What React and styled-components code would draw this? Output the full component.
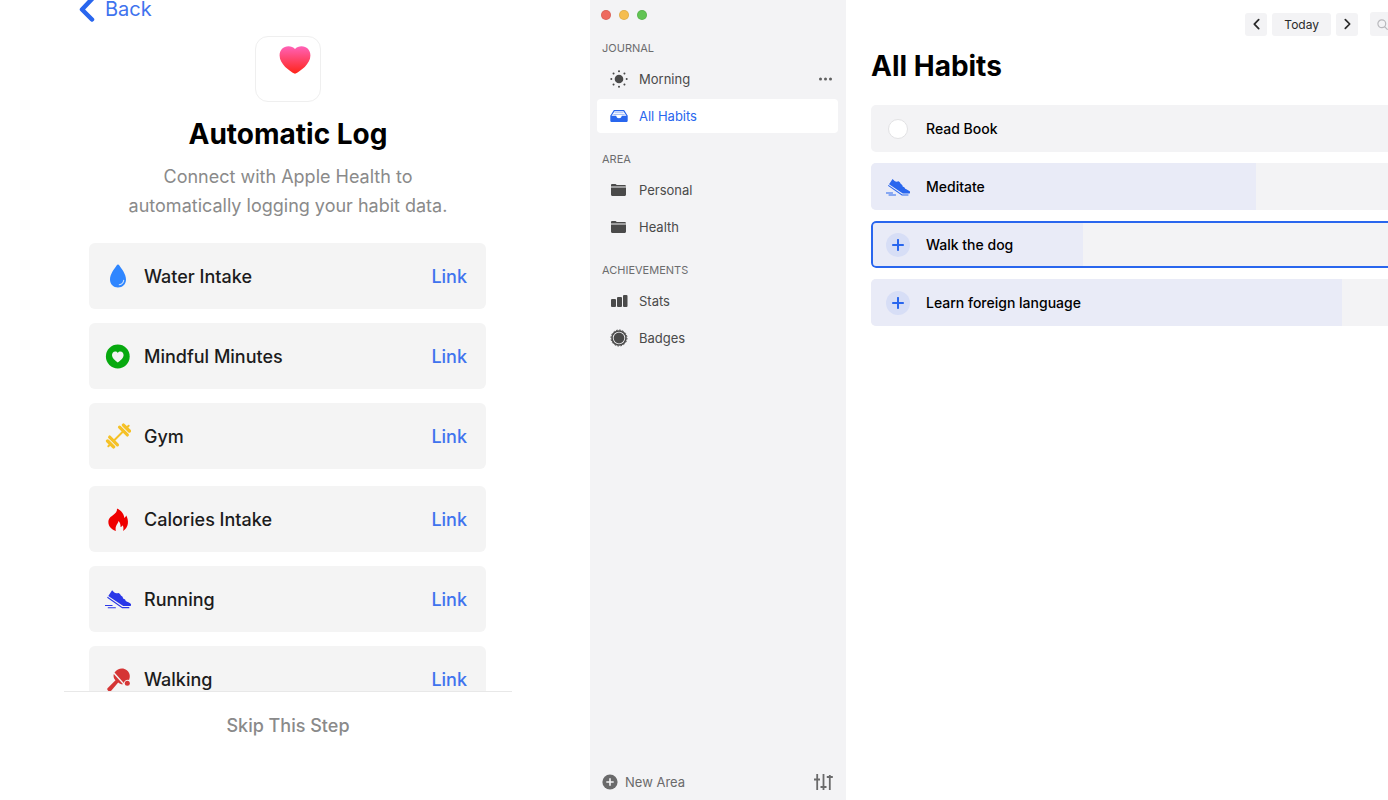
import styled, { createGlobalStyle } from 'styled-components';

const color = {
    blue: '#2966ee',
    link: '#3f73ee',
    panel: '#f3f3f5',
    card: '#f4f4f4',
    progress: '#e9ebf7',
    icon: '#4a4a4a',
    muted: '#8a8a8a',
}

const GlobalStyle = createGlobalStyle`
    *{
        box-sizing: border-box;
    }
    body{
        margin: 0;
        background: #fff;
        font-family: Inter, 'Liberation Sans', sans-serif;
    }
    button{
        border: none;
        background: none;
        padding: 0;
        font: inherit;
        color: inherit;
        cursor: pointer;
    }
    h1, h2, p, ul{
        margin: 0;
        padding: 0;
    }
    ul{
        list-style: none;
    }
    svg{
        display: block;
        flex: none;
    }
`

const Page = styled.div`
    display: grid;
    grid-template-columns: minmax(0, 590fr) 256px minmax(0, 542fr);
    height: 100vh;
    overflow: hidden;
`

/* onboarding */
const Onboarding = styled.section`
    display: flex;
    min-height: 0;
    padding: 0 78px 0 20px;
`

const Marks = styled.div`
    display: flex;
    flex-direction: column;
    gap: 30px;
    flex: 0 0 44px;
    padding-top: 20px;
    span{
        width: 10px;
        height: 10px;
        background: #fdfdfd;
    }
`

const Phone = styled.div`
    display: flex;
    flex-direction: column;
    flex: 1;
    min-width: 0;
`

const BackButton = styled.button`
    display: flex;
    align-items: center;
    align-self: flex-start;
    gap: 10px;
    height: 18px;
    margin-left: 15px;
    font-size: 20px;
    line-height: 18px;
    color: ${color.link};
    svg{
        color: ${color.blue};
    }
`

const AppIcon = styled.div`
    align-self: center;
    display: flex;
    justify-content: flex-end;
    width: 66px;
    height: 66px;
    margin-top: 18px;
    padding: 9px;
    border: 1px solid #efefef;
    border-radius: 13px;
`

const Intro = styled.div`
    padding: 14px 24px 23px;
    text-align: center;
    h1{
        font-size: 28px;
        line-height: 36px;
        font-weight: 700;
        margin-bottom: 10px;
    }
    p{
        font-size: 18px;
        line-height: 29px;
        color: ${color.muted};
    }
`

const Sources = styled.div`
    display: flex;
    flex-direction: column;
    flex: 1;
    gap: 17px;
    min-height: 0;
    overflow: hidden;
    padding: 0 26px 0 25px;
    ul{
        display: flex;
        flex-direction: column;
        gap: 14px;
    }
`

const Source = styled.li`
    display: flex;
    align-items: center;
    gap: 13px;
    height: 66px;
    padding: 0 19px 0 16px;
    border-radius: 6px;
    background: ${color.card};
    font-size: 18px;
    font-weight: 500;
    color: #1c1c1c;
    .name{
        flex: 1;
    }
    button{
        color: ${color.link};
    }
`

const Skip = styled.footer`
    display: flex;
    justify-content: center;
    height: 109px;
    border-top: 1px solid #e8e8e8;
    button{
        height: 66px;
        font-size: 18px;
        font-weight: 500;
        color: ${color.muted};
    }
`

/* sidebar */
const Sidebar = styled.aside`
    display: flex;
    flex-direction: column;
    padding: 10px 8px 0 7px;
    background: ${color.panel};
`

const Lights = styled.div`
    display: flex;
    gap: 8px;
    padding-left: 4px;
    margin-bottom: 2px;
`

const Light = styled.span`
    width: 10px;
    height: 10px;
    border-radius: 50%;
    border: 1px solid rgba(0, 0, 0, .08);
    background: ${props => props.$fill};
`

const Section = styled.nav`
    margin-top: 18px;
    h2{
        padding-left: 5px;
        margin-bottom: 6px;
        font-size: 11px;
        line-height: 16px;
        font-weight: 400;
        color: #6c6c6e;
    }
    ul{
        display: flex;
        flex-direction: column;
        gap: 3px;
    }
`

const NavItem = styled.li`
    display: flex;
    align-items: center;
    height: 34px;
    padding: 0 5px 0 13px;
    border-radius: 4px;
    background: ${props => props.$active ? '#fff' : 'transparent'};
    color: ${props => props.$active ? color.blue : color.icon};
    a{
        display: flex;
        align-items: center;
        flex: 1;
        gap: 11px;
        font-size: 13px;
        color: inherit;
        text-decoration: none;
    }
`

const SidebarFooter = styled.div`
    display: flex;
    align-items: center;
    justify-content: space-between;
    height: 37px;
    margin-top: auto;
    padding: 0 5px;
    color: #6a6a6b;
    button{
        display: flex;
        align-items: center;
        gap: 7px;
        font-size: 13px;
    }
`

/* habits */
const Main = styled.main`
    min-width: 0;
    overflow: hidden;
    padding: 12px 0 0 25px;
    h1{
        margin: 11px 0 20px;
        font-size: 28px;
        line-height: 38px;
        font-weight: 700;
    }
`

const Toolbar = styled.div`
    display: flex;
    align-items: center;
    justify-content: flex-end;
    gap: 5px;
`

const ToolButton = styled.button`
    display: flex;
    align-items: center;
    justify-content: center;
    min-width: 22px;
    height: 23px;
    padding: 0 ${props => props.$wide ? '12px' : '0'};
    border-radius: 3px;
    background: ${color.panel};
    font-size: 12px;
    color: #2a2a2a;
`

const Search = styled.label`
    display: flex;
    align-items: center;
    flex: 0 0 18px;
    height: 24px;
    margin-left: 7px;
    padding-left: 7px;
    border-radius: 3px 0 0 3px;
    background: ${color.panel};
    color: #b9b9bd;
    overflow: hidden;
    input{
        width: 120px;
        margin-left: 6px;
        border: none;
        background: none;
        font: inherit;
    }
`

const Habits = styled.ul`
    display: flex;
    flex-direction: column;
    gap: 11px;
    margin-right: -8px;
`

const Habit = styled.li`
    position: relative;
    display: flex;
    align-items: center;
    height: 47px;
    border-radius: 5px;
    overflow: hidden;
    background: ${color.panel};
    &::after{
        content: '';
        position: absolute;
        inset: 0;
        border: ${props => props.$selected ? `2px solid ${color.blue}` : 'none'};
        border-radius: 5px;
        pointer-events: none;
    }
    label, .row{
        position: relative;
        display: flex;
        align-items: center;
        gap: 16px;
        padding-left: 15px;
        font-size: 14px;
        font-weight: 500;
        color: #000;
    }
`

const Progress = styled.div`
    position: absolute;
    top: 0;
    bottom: 0;
    left: 0;
    background: ${color.progress};
`

const Check = styled.input`
    appearance: none;
    width: 20px;
    height: 20px;
    margin: 0 2px;
    border: 1px solid #e2e2e4;
    border-radius: 50%;
    background: #fff;
`

const AddButton = styled.button`
    display: flex;
    align-items: center;
    justify-content: center;
    width: 24px;
    height: 24px;
    border-radius: 50%;
    background: #d7def6;
    color: ${color.blue};
`

//icons
const Drop = () => (
    <svg width="26" height="26" viewBox="0 0 26 26">
        <path d="M13 1.4c.5 0 1 .4 1.4 1.1 2.4 3.6 6.6 8.7 6.6 14 0 4.8-3.5 8-8 8s-8-3.2-8-8c0-5.300 4.200-10.400 6.600-14 .4-.7.9-1.100 1.400-1.100z" fill="#2f86ff" />
        <path d="M18.700 17.200c-.3 2.600-1.900 4.100-4.400 4.600" fill="none" stroke="#cfe2fb" strokeWidth="1.100" strokeLinecap="round" />
    </svg>
)

const Mindful = () => (
    <svg width="26" height="26" viewBox="0 0 26 26">
        <circle cx="12.800" cy="13.500" r="11.900" fill="#07a90f" />
        <path d="M12.800 19.600c-2.600-1.900-5.800-4.500-5.800-7.500 0-2 1.400-3.600 3.200-3.600 1.100 0 2 .5 2.600 1.400.6-.9 1.500-1.400 2.600-1.400 1.800 0 3.200 1.600 3.200 3.600 0 3-3.200 5.600-5.800 7.500z" fill="#f4f4f4" />
    </svg>
)

const Dumbbell = () => (
    <svg width="26" height="26" viewBox="0 0 26 26" fill="none" stroke="#f5c126" strokeLinecap="round">
        <g transform="translate(13.500 13) rotate(-45)">
            <path d="M-6 0H6" strokeWidth="2" />
            <path d="M-7-5.500v11M7-5.500v11" strokeWidth="3.200" />
            <path d="M-11.200-4.200v8.400M11.200-4.200v8.400" strokeWidth="3.400" />
            <path d="M-14.400 0h2M12.400 0h2" strokeWidth="2" />
        </g>
    </svg>
)

const Flame = () => (
    <svg width="26" height="26" viewBox="0 0 26 26">
        <path d="M12 2.500c4.300 1.900 7 5.400 7.300 9.400 1-.5 1.700-1.300 2-2.300 2.600 5.300 2.700 11.700-3.300 15.400.7-1.900.6-4-.4-5.700-.5 1.100-1.200 1.600-2.100 1.800.2-2.600-.4-4.700-2-6.200-.3 3-3.900 4.600-2.600 10-5.300-1.600-8.500-5.900-7.300-10.900 1.300-4.600 9-5.500 8.400-11.500z" fill="#ef0000" />
    </svg>
)

const Sneaker = ({ fill, size = 26 }) => (
    <svg width={size} height={size} viewBox="0 0 26 26">
        <path d="M7.100 4.200l2.200 2.300c1.200 1 2.600.9 4.300.4l1.400 1 .9 1.700 1.700 1.200.5 1.700 2 1.100.7 1.300c1.600 1 3.700 1.400 5.200 3.100.7 1-.1 2.100-1.300 2.100h-6.500L3.300 10.100z" fill={fill} />
        <path d="M2.400 11.300L17.300 21.600h7" fill="none" stroke={fill} strokeWidth="1.100" />
        <path d="M0 19.500h7.500M2.800 21.700h8" stroke={fill} strokeWidth="1.100" />
    </svg>
)

const Paddle = () => (
    <svg width="26" height="26" viewBox="0 0 26 26" fill="#d53535">
        <path d="M9.500 6.500c3.200-4.200 8.500-5.300 12.300-2.300 3.400 2.700 3.600 6.800 2.200 9.700-2.600-.8-4.700.7-5.200 3.100z" />
        <path d="M8.800 8l9.300 10.200c-1.700.2-3.400-.3-4.900-1.700l-7.300 8.600c-1.700 1.300-4.600-1.200-3.400-2.900l8-7.900c-1.800-1.800-2.300-4.100-1.700-6.300z" />
        <circle cx="22.300" cy="17.200" r="2.500" />
    </svg>
)

const Heart = () => (
    <svg width="32" height="28" viewBox="0 0 32 28">
        <defs>
            <linearGradient id="heart" x1="0" y1="0" x2="0" y2="1">
                <stop offset="0" stopColor="#ff62b8" />
                <stop offset="1" stopColor="#ff2418" />
            </linearGradient>
        </defs>
        <path d="M16 3C17.600 1 20 .2 22.500 .2c5.200 0 8.900 3.800 8.900 9.200C31.400 18 21.500 25 16 27.800 10.500 25 .6 18 .6 9.400.6 4 4.300 .2 9.500 .2 12 .2 14.400 1 16 3z" fill="url(#heart)" />
    </svg>
)

const Chevron = ({ large, flip }) => (
    <svg width={large ? 16 : 7} height={large ? 26 : 12} viewBox="0 0 16 26" fill="none" stroke="currentColor" strokeWidth={large ? 4.5 : 4} strokeLinecap="round" strokeLinejoin="round">
        <path d={flip ? 'M3 3l10 10L3 23' : 'M13 3L3 13.500l10 10'} />
    </svg>
)

const NavIcon = ({ children }) => (
    <svg width="18" height="18" viewBox="0 0 18 18" fill="currentColor">{children}</svg>
)

const Sun = () => (
    <NavIcon>
        <circle cx="9" cy="9" r="4.300" />
        {[0, 45, 90, 135, 180, 225, 270, 315].map(deg => (
            <circle key={deg} cx="9" cy="1.300" r="1" transform={`rotate(${deg} 9 9)`} />
        ))}
    </NavIcon>
)

const Tray = () => (
    <NavIcon>
        <path d="M.8 9L4.200 3.600h9.600L17.200 9" fill="none" stroke="currentColor" strokeWidth="1.200" strokeLinejoin="round" />
        <path d="M4.500 5.700h9M3.300 7.500h11.400" stroke="#a9c1f8" strokeWidth="1" />
        <path d="M.3 8.700h5.900c.3 1.700 1.300 2.500 2.800 2.500s2.500-.8 2.800-2.500h5.900v4.800c0 1-.6 1.600-1.600 1.600H1.900c-1 0-1.600-.6-1.600-1.600z" />
    </NavIcon>
)

const Folder = () => (
    <NavIcon>
        <path d="M1 5.500V4.200C1 3.400 1.500 3 2.200 3h3.300l1.300 1h7.900c.8 0 1.300.5 1.300 1.500zM1 6.400h15v7.100c0 .9-.6 1.500-1.500 1.500h-12C1.600 15 1 14.400 1 13.500z" />
    </NavIcon>
)

const Bars = () => (
    <NavIcon>
        <rect x="1" y="7" width="5" height="8" rx="1" />
        <rect x="7" y="5" width="5" height="10" rx="1" />
        <rect x="13" y="3" width="4.500" height="12" rx="1" />
    </NavIcon>
)

const Badge = () => (
    <NavIcon>
        <circle cx="9" cy="9" r="5.400" />
        <circle cx="9" cy="9" r="7" fill="none" stroke="currentColor" strokeWidth="1.600" />
        <circle cx="9" cy="9" r="8" fill="none" stroke="currentColor" strokeWidth="1" strokeDasharray="1.600 1.540" />
    </NavIcon>
)

const Dots = () => (
    <svg width="15" height="4" viewBox="0 0 15 4" fill="#5f5f5f">
        <circle cx="2.500" cy="2" r="1.500" />
        <circle cx="7.500" cy="2" r="1.500" />
        <circle cx="12.500" cy="2" r="1.500" />
    </svg>
)

const PlusCircle = () => (
    <svg width="16" height="16" viewBox="0 0 16 16">
        <circle cx="8" cy="8" r="7.600" fill="currentColor" />
        <path d="M8 4.300v7.400M4.300 8h7.400" stroke="#f3f3f5" strokeWidth="1.600" />
    </svg>
)

const Sliders = () => (
    <svg width="19" height="16" viewBox="0 0 19 16" fill="none" stroke="currentColor" strokeWidth="1.800">
        <path d="M3.200 0v16M9.500 0v16M15.800 1v15" />
        <path d="M0 5.500h6M6.500 13h6M12.800 3h6" />
    </svg>
)

const Plus = () => (
    <svg width="12" height="12" viewBox="0 0 12 12" stroke="currentColor" strokeWidth="2" strokeLinecap="round">
        <path d="M6 .9v10.200M.9 6h10.200" />
    </svg>
)

const Magnifier = () => (
    <svg width="11" height="11" viewBox="0 0 11 11" fill="none" stroke="currentColor" strokeWidth="1.200" strokeLinecap="round">
        <circle cx="4.800" cy="4.800" r="3.900" />
        <path d="M7.800 7.800l2.500 2.500" />
    </svg>
)

const sourceGroups = [
    [
        { name: 'Water Intake', icon: <Drop /> },
        { name: 'Mindful Minutes', icon: <Mindful /> },
        { name: 'Gym', icon: <Dumbbell /> },
    ],
    [
        { name: 'Calories Intake', icon: <Flame /> },
        { name: 'Running', icon: <Sneaker fill="#2a37e8" /> },
        { name: 'Walking', icon: <Paddle /> },
    ],
]

const sections = [
    { title: 'JOURNAL', items: [{ name: 'Morning', icon: <Sun />, more: true }, { name: 'All Habits', icon: <Tray />, active: true }] },
    { title: 'AREA', items: [{ name: 'Personal', icon: <Folder /> }, { name: 'Health', icon: <Folder /> }] },
    { title: 'ACHIEVEMENTS', items: [{ name: 'Stats', icon: <Bars /> }, { name: 'Badges', icon: <Badge /> }] },
]

const habits = [
    { name: 'Read Book', type: 'check', progress: 0 },
    { name: 'Meditate', type: 'auto', progress: 73.3 },
    { name: 'Walk the dog', type: 'add', progress: 40.4, selected: true },
    { name: 'Learn foreign language', type: 'add', progress: 89.7 },
]

function HabitRow({ habit }) {
    return (
        <Habit $selected={habit.selected}>
            <Progress style={{ width: `${habit.progress}%` }} />
            {habit.type === 'check' ? (
                <label>
                    <Check type="checkbox" />
                    {habit.name}
                </label>
            ) : (
                <div className="row">
                    {habit.type === 'auto'
                        ? <Sneaker fill={color.blue} size={24} />
                        : <AddButton aria-label={`Log ${habit.name}`}><Plus /></AddButton>}
                    {habit.name}
                </div>
            )}
        </Habit>
    )
}

export default function App() {
    return (
        <Page>
            <GlobalStyle />
            <Onboarding>
                <Marks>
                    {Array.from({ length: 9 }, (_, i) => <span key={i} />)}
                </Marks>
                <Phone>
                    <BackButton><Chevron large />Back</BackButton>
                    <AppIcon><Heart /></AppIcon>
                    <Intro>
                        <h1>Automatic Log</h1>
                        <p>Connect with Apple Health to<br />automatically logging your habit data.</p>
                    </Intro>
                    <Sources>
                        {sourceGroups.map((group, i) => (
                            <ul key={i}>
                                {group.map(source => (
                                    <Source key={source.name}>
                                        {source.icon}
                                        <span className="name">{source.name}</span>
                                        <button>Link</button>
                                    </Source>
                                ))}
                            </ul>
                        ))}
                    </Sources>
                    <Skip><button>Skip This Step</button></Skip>
                </Phone>
            </Onboarding>
            <Sidebar>
                <Lights>
                    <Light $fill="#ee6a5f" />
                    <Light $fill="#f5bd4f" />
                    <Light $fill="#61c454" />
                </Lights>
                {sections.map(section => (
                    <Section key={section.title}>
                        <h2>{section.title}</h2>
                        <ul>
                            {section.items.map(item => (
                                <NavItem key={item.name} $active={item.active}>
                                    <a href="#">{item.icon}{item.name}</a>
                                    {item.more && <button aria-label="More"><Dots /></button>}
                                </NavItem>
                            ))}
                        </ul>
                    </Section>
                ))}
                <SidebarFooter>
                    <button><PlusCircle />New Area</button>
                    <button aria-label="Settings"><Sliders /></button>
                </SidebarFooter>
            </Sidebar>
            <Main>
                <Toolbar>
                    <ToolButton aria-label="Previous day"><Chevron /></ToolButton>
                    <ToolButton $wide>Today</ToolButton>
                    <ToolButton aria-label="Next day"><Chevron flip /></ToolButton>
                    <Search><Magnifier /><input aria-label="Search" /></Search>
                </Toolbar>
                <h1>All Habits</h1>
                <Habits>
                    {habits.map(habit => <HabitRow key={habit.name} habit={habit} />)}
                </Habits>
            </Main>
        </Page>
    )
}
